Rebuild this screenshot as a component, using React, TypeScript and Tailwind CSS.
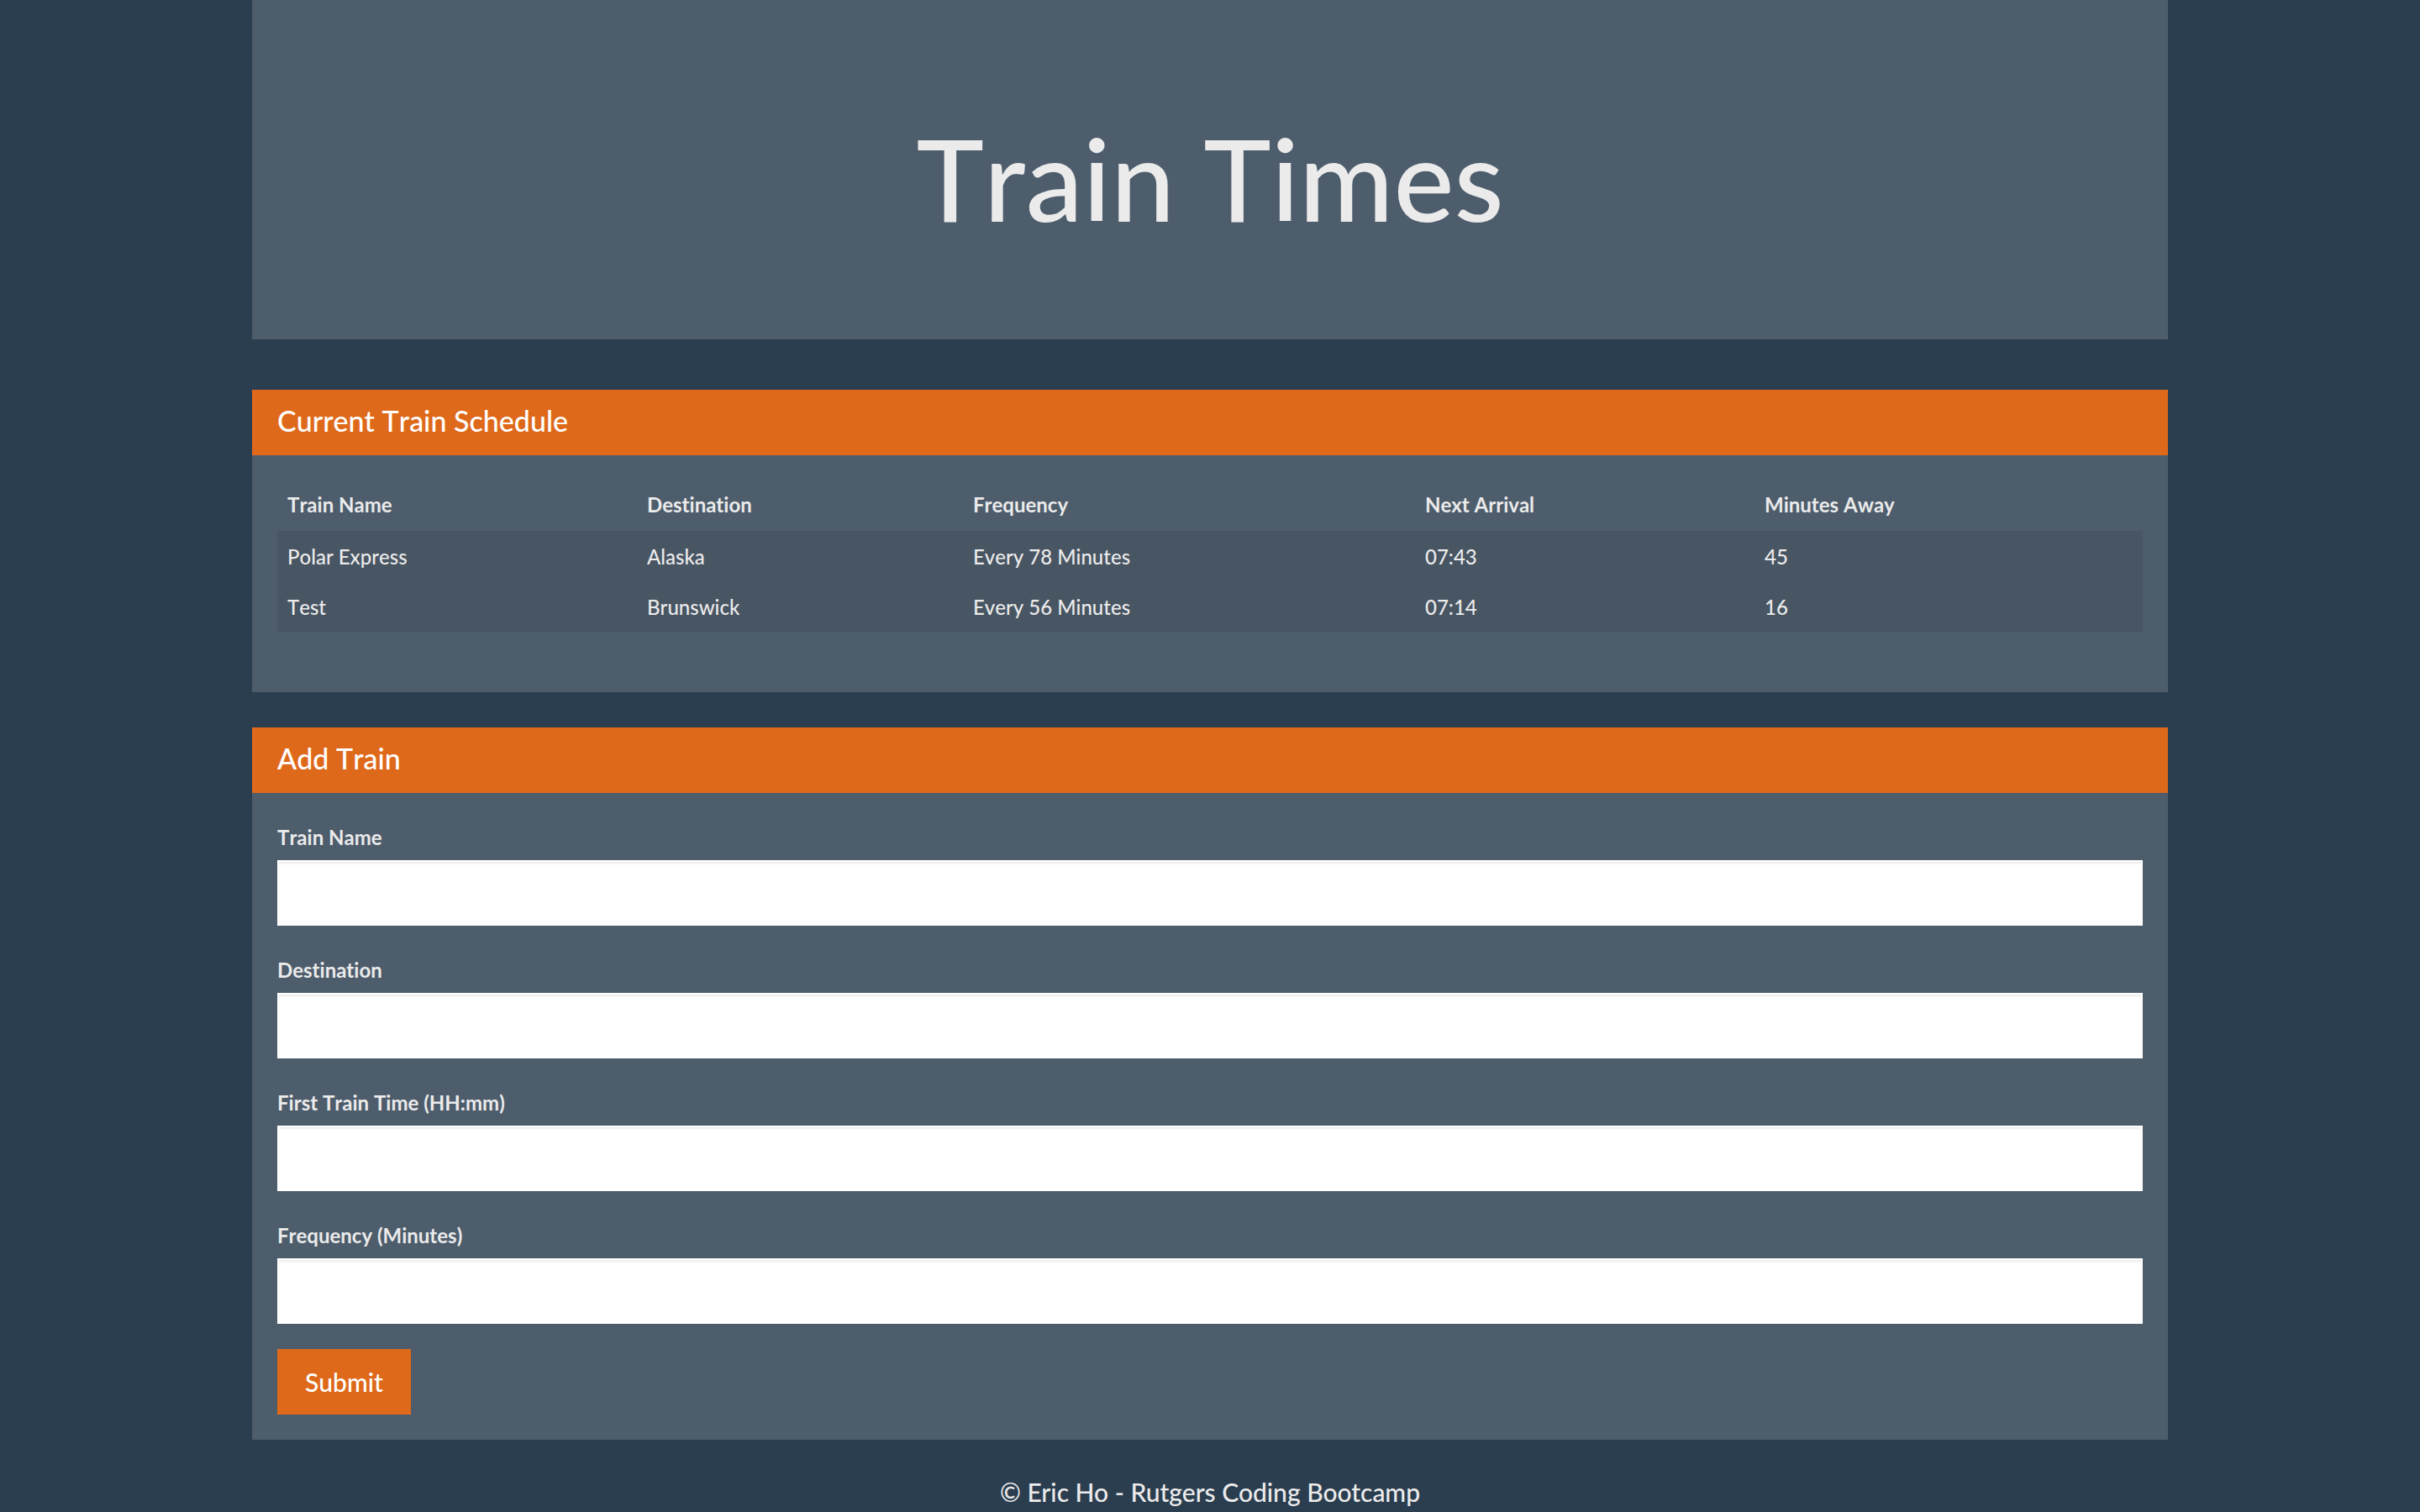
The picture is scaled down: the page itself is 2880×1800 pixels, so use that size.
import React from 'react';

const trains = [
  { name: 'Polar Express', destination: 'Alaska', frequency: 'Every 78 Minutes', next: '07:43', away: '45' },
  { name: 'Test', destination: 'Brunswick', frequency: 'Every 56 Minutes', next: '07:14', away: '16' },
];

const fields = [
  { id: 'train-name', label: 'Train Name' },
  { id: 'destination', label: 'Destination' },
  { id: 'first-time', label: 'First Train Time (HH:mm)' },
  { id: 'frequency', label: 'Frequency (Minutes)' },
];

function Panel({ title, children }: { title: string; children: React.ReactNode }) {
  return (
    <section className="mb-[42px] bg-[#4e5d6c]">
      <h2 className="bg-[#df691a] px-[30px] pt-[18px] pb-[22px] text-[34px] leading-[38px] text-white">{title}</h2>
      <div className="p-[30px]">{children}</div>
    </section>
  );
}

export default function App() {
  return (
    <div className="min-h-screen overflow-hidden bg-[#2b3e50] font-['Lato',sans-serif] text-[24px] leading-[34px] font-medium text-[#ebebeb] [font-kerning:none] [font-variant-ligatures:none]">
      <div className="mx-auto max-w-[2280px]">
        <header className="mb-[60px] bg-[#4e5d6c] pt-[148px] pb-[128px]">
          <h1 className="text-center text-[136px] leading-[128px] font-medium">Train Times</h1>
        </header>
        <main>
          <Panel title="Current Train Schedule">
            <table className="mb-[42px] w-full text-left">
              <thead>
                <tr>
                  <th className="w-[428px] px-[12px] pt-[12px] pb-[14px]">Train Name</th>
                  <th className="w-[388px] px-[12px] pt-[12px] pb-[14px]">Destination</th>
                  <th className="w-[538px] px-[12px] pt-[12px] pb-[14px]">Frequency</th>
                  <th className="w-[404px] px-[12px] pt-[12px] pb-[14px]">Next Arrival</th>
                  <th className="px-[12px] pt-[12px] pb-[14px]">Minutes Away</th>
                </tr>
              </thead>
              <tbody className="bg-[#485563]">
                {trains.map((t) => (
                  <tr key={t.name}>
                    <td className="px-[12px] pt-[14px] pb-[12px]">{t.name}</td>
                    <td className="px-[12px] pt-[14px] pb-[12px]">{t.destination}</td>
                    <td className="px-[12px] pt-[14px] pb-[12px]">{t.frequency}</td>
                    <td className="px-[12px] pt-[14px] pb-[12px]">{t.next}</td>
                    <td className="px-[12px] pt-[14px] pb-[12px]">{t.away}</td>
                  </tr>
                ))}
              </tbody>
            </table>
          </Panel>
          <Panel title="Add Train">
            <form onSubmit={(e) => e.preventDefault()}>
              {fields.map((f) => (
                <div key={f.id} className="mb-[30px]">
                  <label htmlFor={f.id} className="block pt-[6px] pb-[10px] font-bold">{f.label}</label>
                  <input
                    id={f.id}
                    type="text"
                    className="block h-[78px] w-full border-2 border-white bg-white px-[24px] text-[#2b3e50] shadow-[inset_0_2px_2px_rgba(0,0,0,0.075)]"
                  />
                </div>
              ))}
              <button type="submit" className="block h-[78px] bg-[#df691a] px-[33px] text-[30px] text-white">Submit</button>
            </form>
          </Panel>
        </main>
        <footer className="text-center text-[30px] leading-[40px] [font-kerning:normal]">© Eric Ho - Rutgers Coding Bootcamp</footer>
      </div>
    </div>
  );
}
